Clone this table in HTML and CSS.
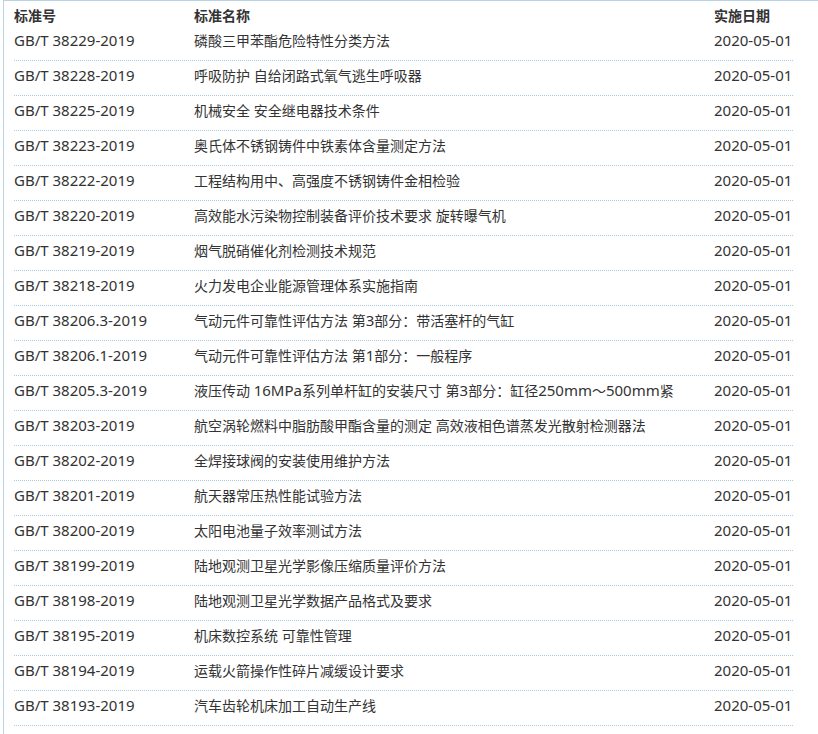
FILE: index.html
```html
<!DOCTYPE html>
<html lang="zh-CN">
<head>
<meta charset="utf-8">
<title>标准列表</title>
<link rel="stylesheet" href="styles.css">
</head>
<body>
<div class="panel">
  <div class="row head">
    <div>标准号</div><div>标准名称</div><div>实施日期</div>
  </div>
  <div class="row"><div>GB/T 38229-2019</div><div>磷酸三甲苯酯危险特性分类方法</div><div>2020-05-01</div></div>
  <div class="row"><div>GB/T 38228-2019</div><div>呼吸防护 自给闭路式氧气逃生呼吸器</div><div>2020-05-01</div></div>
  <div class="row"><div>GB/T 38225-2019</div><div>机械安全 安全继电器技术条件</div><div>2020-05-01</div></div>
  <div class="row"><div>GB/T 38223-2019</div><div>奥氏体不锈钢铸件中铁素体含量测定方法</div><div>2020-05-01</div></div>
  <div class="row"><div>GB/T 38222-2019</div><div>工程结构用中、高强度不锈钢铸件金相检验</div><div>2020-05-01</div></div>
  <div class="row"><div>GB/T 38220-2019</div><div>高效能水污染物控制装备评价技术要求 旋转曝气机</div><div>2020-05-01</div></div>
  <div class="row"><div>GB/T 38219-2019</div><div>烟气脱硝催化剂检测技术规范</div><div>2020-05-01</div></div>
  <div class="row"><div>GB/T 38218-2019</div><div>火力发电企业能源管理体系实施指南</div><div>2020-05-01</div></div>
  <div class="row"><div>GB/T 38206.3-2019</div><div>气动元件可靠性评估方法 第<span class="lat">3</span>部分：带活塞杆的气缸</div><div>2020-05-01</div></div>
  <div class="row"><div>GB/T 38206.1-2019</div><div>气动元件可靠性评估方法 第<span class="lat">1</span>部分：一般程序</div><div>2020-05-01</div></div>
  <div class="row"><div>GB/T 38205.3-2019</div><div>液压传动 <span class="lat">16MPa</span>系列单杆缸的安装尺寸 第<span class="lat">3</span>部分：缸径<span class="lat">250mm</span>～<span class="lat">500mm</span>紧</div><div>2020-05-01</div></div>
  <div class="row"><div>GB/T 38203-2019</div><div>航空涡轮燃料中脂肪酸甲酯含量的测定 高效液相色谱蒸发光散射检测器法</div><div>2020-05-01</div></div>
  <div class="row"><div>GB/T 38202-2019</div><div>全焊接球阀的安装使用维护方法</div><div>2020-05-01</div></div>
  <div class="row"><div>GB/T 38201-2019</div><div>航天器常压热性能试验方法</div><div>2020-05-01</div></div>
  <div class="row"><div>GB/T 38200-2019</div><div>太阳电池量子效率测试方法</div><div>2020-05-01</div></div>
  <div class="row"><div>GB/T 38199-2019</div><div>陆地观测卫星光学影像压缩质量评价方法</div><div>2020-05-01</div></div>
  <div class="row"><div>GB/T 38198-2019</div><div>陆地观测卫星光学数据产品格式及要求</div><div>2020-05-01</div></div>
  <div class="row"><div>GB/T 38195-2019</div><div>机床数控系统 可靠性管理</div><div>2020-05-01</div></div>
  <div class="row"><div>GB/T 38194-2019</div><div>运载火箭操作性碎片减缓设计要求</div><div>2020-05-01</div></div>
  <div class="row"><div>GB/T 38193-2019</div><div>汽车齿轮机床加工自动生产线</div><div>2020-05-01</div></div>
</div>
</body>
</html>
```

FILE: styles.css
```css
html, body {
  margin: 0;
  padding: 0;
  background: #ffffff;
  overflow: hidden;
}

body {
  font-family: "Noto Sans", "Noto Sans CJK SC", sans-serif;
  font-size: 14px;
  color: #333333;
}

.panel {
  margin-left: 3px;
  border-top: 1px solid #b9d3e6;
  border-left: 1px solid #b9d3e6;
  padding-left: 10px;
  height: 760px;
}

.row {
  display: grid;
  grid-template-columns: 180px 520px 79px;
  width: 779px;
  line-height: 21px;
  height: 21px;
  padding: 4px 0 9px;
  border-bottom: 1px dotted #a9c9e2;
  white-space: nowrap;
}

.row > div:nth-child(1),
.row > div:nth-child(3) {
  font-size: 15px;
}

.row > div:nth-child(2) {
  overflow: hidden;
}

.lat {
  font-size: 15px;
}

.row.head {
  font-weight: bold;
  height: 21px;
  line-height: 21px;
  padding: 4px 0 0;
  border-bottom: none;
}

.row.head > div {
  font-size: 14px;
}
```
